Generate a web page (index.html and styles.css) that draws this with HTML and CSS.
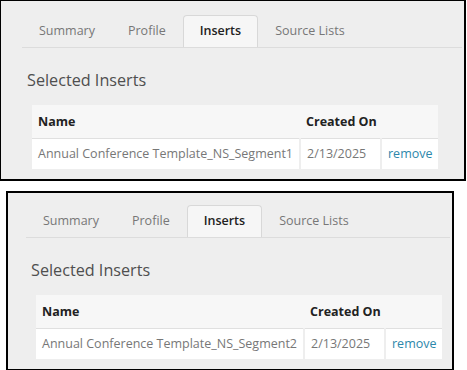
FILE: index.html
```html
<!DOCTYPE html>
<html lang="en">
<head>
  <meta charset="UTF-8">
  <title>Selected Inserts</title>
  <link rel="stylesheet" href="styles.css">
</head>
<body>

<!-- First capture -->
<div class="shot shot-first">
  <ul class="tabs">
    <li>Summary</li>
    <li>Profile</li>
    <li class="active">Inserts</li>
    <li>Source Lists</li>
  </ul>
  <h2>Selected Inserts</h2>
  <table class="inserts">
    <colgroup>
      <col class="col-name">
      <col class="col-date">
      <col class="col-action">
    </colgroup>
    <thead>
    <tr>
      <th>Name</th>
      <th>Created On</th>
      <th></th>
    </tr>
    </thead>
    <tbody>
    <tr>
      <td>Annual Conference Template_NS_Segment1</td>
      <td>2/13/2025</td>
      <td><a href="#">remove</a></td>
    </tr>
    </tbody>
  </table>
</div>

<!-- Second capture -->
<div class="shot shot-second">
  <ul class="tabs">
    <li>Summary</li>
    <li>Profile</li>
    <li class="active">Inserts</li>
    <li>Source Lists</li>
  </ul>
  <h2>Selected Inserts</h2>
  <table class="inserts">
    <colgroup>
      <col class="col-name">
      <col class="col-date">
      <col class="col-action">
    </colgroup>
    <thead>
    <tr>
      <th>Name</th>
      <th>Created On</th>
      <th></th>
    </tr>
    </thead>
    <tbody>
    <tr>
      <td>Annual Conference Template_NS_Segment2</td>
      <td>2/13/2025</td>
      <td><a href="#">remove</a></td>
    </tr>
    </tbody>
  </table>
</div>

</body>
</html>
```

FILE: styles.css
```css
/* General Reset */
* {
    margin: 0;
    padding: 0;
    box-sizing: border-box;
}

body {
    font-family: 'Open Sans', sans-serif;
    background-color: #ffffff;
    overflow: hidden;
}

.shot {
    background-color: #eeeeee;
    border: 2px solid #000;
}

.shot-first {
    width: 466px;
    height: 181px;
    border-top-width: 1px;
    border-left-width: 1px;
    padding: 14px 2px 0 21px;
}

.shot-second {
    width: 448px;
    height: 180px;
    margin: 10px 0 0 6px;
    padding: 12px 2px 0 18px;
}

/* Tabs */
.tabs {
    list-style: none;
    display: flex;
    border-bottom: 1px solid #dcdcdc;
}

.tabs li {
    height: 32px;
    line-height: 30px;
    padding: 0 15px;
    margin-right: 1px;
    font-size: 12.5px;
    color: #777;
    border: 1px solid transparent;
    border-bottom: none;
}

.tabs li:first-child {
    padding-left: 16px;
}

.tabs li.active {
    color: #222;
    font-weight: 600;
    background-color: #f6f6f6;
    border-color: #d8d8d8;
    border-radius: 4px 4px 0 0;
    padding: 0 16px;
}

h2 {
    font-size: 16.2px;
    font-weight: 400;
    line-height: 20px;
    color: #4f4f4f;
    margin: 22px 0 15px 5px;
}

/* Table */
.inserts {
    width: 406px;
    margin-left: 10px;
    table-layout: fixed;
    border-collapse: collapse;
    font-size: 12.5px;
}

.col-name {
    width: 268px;
}

.col-date {
    width: 81px;
}

.col-action {
    width: 57px;
}

.inserts th, .inserts td {
    text-align: left;
    white-space: nowrap;
    padding: 0 6px;
}

.inserts th {
    height: 33px;
    background-color: #f7f7f7;
    color: #222;
    font-weight: 700;
    border-bottom: 1px solid #e0e0e0;
}

.inserts td {
    height: 31px;
    background-color: #fff;
    color: #777;
    border-left: 2px solid #eeeeee;
}

.inserts td:first-child {
    border-left: none;
}

.inserts a {
    color: #2d87ab;
    text-decoration: none;
}
```
